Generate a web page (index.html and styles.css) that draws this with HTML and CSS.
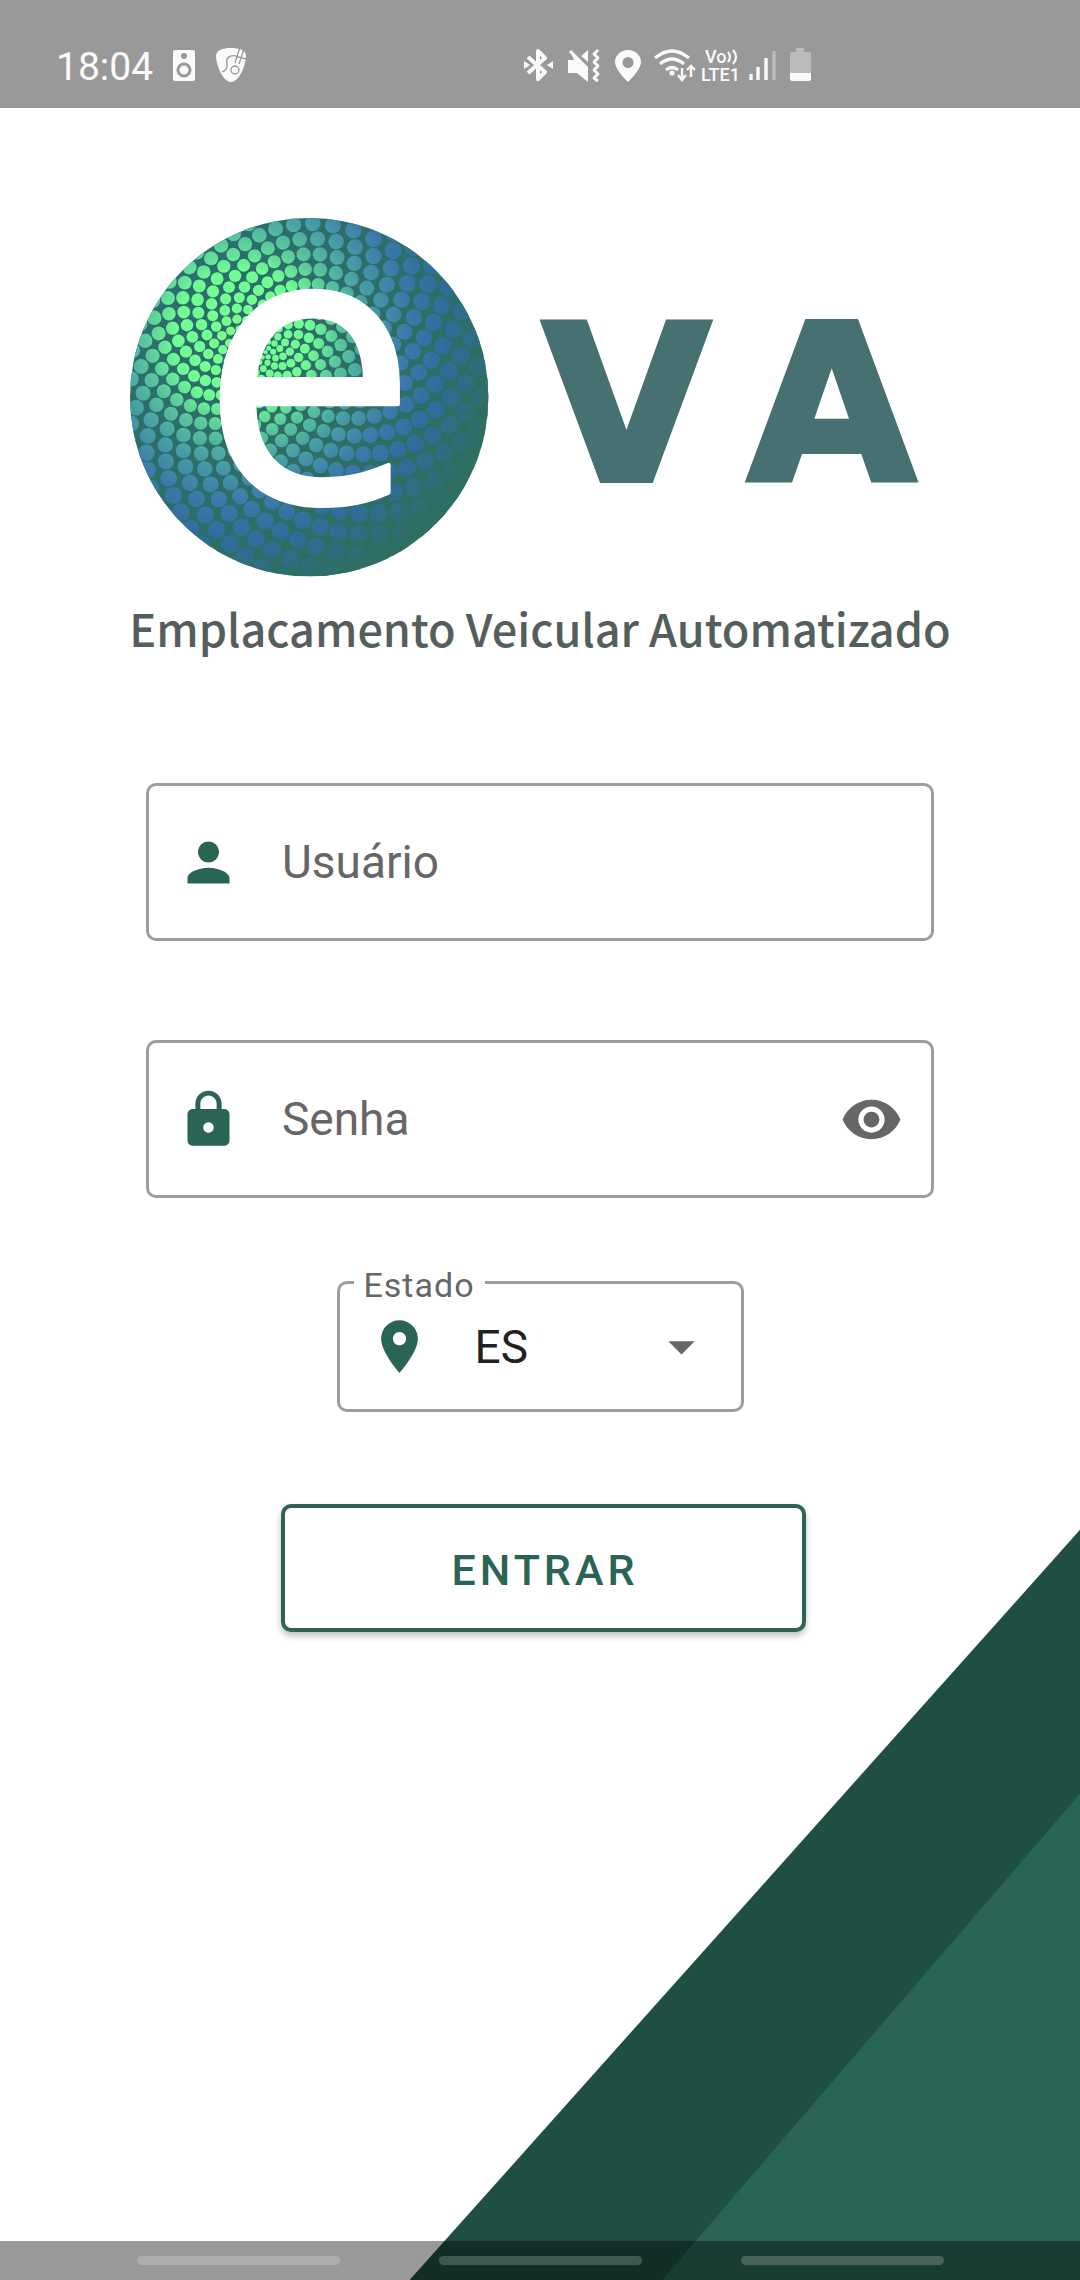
FILE: index.html
```html
<!DOCTYPE html>
<html lang="pt-BR">
<head>
<meta charset="utf-8">
<meta name="viewport" content="width=device-width, initial-scale=1">
<title>eVA - Emplacamento Veicular Automatizado</title>
<link rel="stylesheet" href="styles.css">
</head>
<body>
<svg class="corner" viewBox="0 0 668 750" preserveAspectRatio="xMaxYMax slice" aria-hidden="true">
  <path class="corner-dark" d="M670 0V752H-2Z"/>
  <path class="corner-light" d="M670 263V752H250Z"/>
</svg>

<header class="status">
  <div class="status-left">
    <time class="clock">18:04</time>
    <svg width="22" height="38" viewBox="0 0 22 38" aria-hidden="true">
      <rect x="0" y="4" width="22" height="31" rx="2" fill="#fafafa"/>
      <circle cx="11" cy="10" r="3" fill="#999"/>
      <circle cx="11" cy="24" r="6" fill="#fafafa" stroke="#999" stroke-width="3"/>
    </svg>
    <svg width="32" height="38" viewBox="0 0 32 38" aria-hidden="true">
      <path d="M1 10C1 4 8 2 16 2s15 2 15 8c0 9-7 26-15 26S1 19 1 10Z" fill="#fafafa"/>
      <path d="M7 26c3-1 6-4 5-8-1-4 0-7 4-8 3-1 5 0 7 1l8 2M20 17l5-16M24 18l5-15" fill="none" stroke="#999" stroke-width="1.300"/>
      <circle cx="20" cy="24" r="4" fill="none" stroke="#999" stroke-width="1.300"/>
    </svg>
  </div>
  <div class="status-right">
    <svg width="38" height="38" viewBox="0 0 38 38" aria-hidden="true">
      <path d="M10 11l17 15-7 7V5l7 7-17 15" fill="none" stroke="#fafafa" stroke-width="4" stroke-linejoin="round"/>
      <path d="M6 15l6 4-6 4ZM35 15l-6 4 6 4Z" fill="#fafafa"/>
    </svg>
    <svg width="42" height="38" viewBox="0 0 42 38" aria-hidden="true">
      <path d="M6 14h6l14 12v10l-11-9H6ZM26 4v12l-7-6Z" fill="#fafafa"/>
      <path d="M8 5l18 17v5L12 14Z" fill="#fafafa"/>
      <path d="M8 5l17 17" stroke="#fafafa" stroke-width="3"/>
      <path d="M36 4l-4 4 4 4-4 4 4 4-4 4 4 4-4 4 4 3" fill="none" stroke="#fafafa" stroke-width="3" stroke-linejoin="round"/>
    </svg>
    <svg width="36" height="38" viewBox="0 0 36 38" aria-hidden="true">
      <path d="M18 4C11 4 5 9 5 16c0 8 13 20 13 20s13-12 13-20c0-7-6-12-13-12Zm0 7a5 5 0 1 1 0 11 5 5 0 0 1 0-11Z" fill="#fafafa"/>
    </svg>
    <svg width="44" height="38" viewBox="0 0 44 38" aria-hidden="true">
      <path d="M3 12q17-14 34 0M8 18q12-10 24 0M14 24q6-5 12 0" fill="none" stroke="#fafafa" stroke-width="3.200"/>
      <circle cx="20" cy="27" r="2.600" fill="#fafafa"/>
      <path d="M30 22v10M39 31V21M26 29l4 5 4-5M35 24l4-4 4 4" fill="none" stroke="#fafafa" stroke-width="2.400"/>
    </svg>
    <svg class="volte" width="38" height="38" viewBox="0 0 38 38" role="img" aria-label="VoLTE 1">
      <text x="3" y="17">Vo</text>
      <path d="M26 6q4 5 0 10M31 4q6 7 0 14" fill="none" stroke="#fafafa" stroke-width="2.200"/>
      <text x="-1" y="35">LTE1</text>
    </svg>
    <svg width="32" height="38" viewBox="0 0 32 38" aria-hidden="true">
      <path d="M5 28v6M12 21v13M20 12v22" stroke="#fafafa" stroke-width="3.400"/>
      <path d="M28 5v29" stroke="#bbb" stroke-width="3.400"/>
    </svg>
    <svg width="32" height="38" viewBox="0 0 32 38" aria-hidden="true">
      <path d="M12 2h8v4h5q2 0 2 2v19H6V8q0-2 2-2h4Z" fill="#bbb"/>
      <path d="M6 27h21v6q0 2-2 2H8q-2 0-2-2Z" fill="#fafafa"/>
    </svg>
  </div>
</header>

<main class="login">
  <h1 class="brand">
    <svg class="logo" viewBox="0 0 820 360" role="img" aria-label="eVA">
      <defs>
        <clipPath id="disc"><circle cx="179" cy="179" r="179"/></clipPath>
        <linearGradient id="base" x1="0" y1="0" x2="1" y2="1">
          <stop offset="0" stop-color="#2a6e70"/>
          <stop offset="1" stop-color="#2f6e5e"/>
        </linearGradient>
        <radialGradient id="glow" gradientUnits="userSpaceOnUse" cx="112" cy="118" r="260">
          <stop offset="0" stop-color="#84f580"/>
          <stop offset="0.12" stop-color="#74ff92"/>
          <stop offset="0.26" stop-color="#70fb94"/>
          <stop offset="0.38" stop-color="#58c49c"/>
          <stop offset="0.5" stop-color="#479ca5"/>
          <stop offset="0.64" stop-color="#3a79a9"/>
          <stop offset="0.78" stop-color="#306c9c"/>
          <stop offset="0.92" stop-color="#2f6e78"/>
          <stop offset="1" stop-color="#2f6e62"/>
        </radialGradient>
      </defs>
      <circle cx="179" cy="179" r="179" fill="url(#base)"/>
      <g id="dots" clip-path="url(#disc)" fill="url(#glow)"></g>
      <text class="logo-e" x="179" y="284" text-anchor="middle">e</text>
      <text class="logo-va" x="496" y="262" text-anchor="middle">V</text>
      <text class="logo-va" x="701" y="262" text-anchor="middle">A</text>
    </svg>
    <span class="tagline">Emplacamento Veicular Automatizado</span>
  </h1>

  <form class="form">
    <div class="field">
      <svg class="icon" viewBox="0 0 24 24" aria-hidden="true"><path d="M12 12c2.210 0 4-1.790 4-4s-1.790-4-4-4-4 1.790-4 4 1.790 4 4 4zm0 2c-2.670 0-8 1.340-8 4v2h16v-2c0-2.660-5.330-4-8-4z"/></svg>
      <input type="text" placeholder="Usuário" aria-label="Usuário" autocomplete="username">
    </div>
    <div class="field">
      <svg class="icon" viewBox="0 0 24 24" aria-hidden="true"><path d="M18 8h-1V6c0-2.760-2.240-5-5-5S7 3.240 7 6v2H6c-1.100 0-2 .9-2 2v10c0 1.100.9 2 2 2h12c1.100 0 2-.9 2-2V10c0-1.100-.9-2-2-2zm-6 9c-1.100 0-2-.9-2-2s.9-2 2-2 2 .9 2 2-.9 2-2 2zm3.100-9H8.900V6c0-1.710 1.390-3.100 3.100-3.100s3.100 1.390 3.100 3.100v2z"/></svg>
      <input type="password" placeholder="Senha" aria-label="Senha" autocomplete="current-password">
      <button class="reveal" type="button" aria-label="Mostrar senha">
        <svg class="icon icon-grey" viewBox="0 0 24 24" aria-hidden="true"><path d="M12 4.500C7 4.500 2.730 7.610 1 12c1.730 4.390 6 7.500 11 7.500s9.270-3.110 11-7.500c-1.730-4.390-6-7.500-11-7.500zM12 17c-2.760 0-5-2.240-5-5s2.240-5 5-5 5 2.240 5 5-2.240 5-5 5zm0-8c-1.660 0-3 1.340-3 3s1.340 3 3 3 3-1.340 3-3-1.340-3-3-3z"/></svg>
      </button>
    </div>
    <div class="state">
      <label for="estado">Estado</label>
      <svg class="icon state-pin" viewBox="0 0 24 24" aria-hidden="true"><path d="M12 2C8.130 2 5 5.130 5 9c0 5.250 7 13 7 13s7-7.750 7-13c0-3.870-3.130-7-7-7zm0 9.500c-1.380 0-2.500-1.120-2.500-2.500s1.120-2.500 2.500-2.500 2.500 1.120 2.500 2.500-1.120 2.500-2.500 2.500z"/></svg>
      <select id="estado">
        <option>ES</option>
      </select>
      <svg class="icon icon-grey state-arrow" viewBox="0 0 24 24" aria-hidden="true"><path d="M7 10l5 5 5-5z"/></svg>
    </div>
    <button class="enter" type="submit">ENTRAR</button>
  </form>
</main>

<nav class="navbar" aria-label="Navegação do sistema">
  <span class="pill"></span>
  <span class="pill"></span>
  <span class="pill"></span>
</nav>
<script src="dots.js"></script>
</body>
</html>
```
FILE: styles.css
```css
* {
  box-sizing: border-box;
}

body {
  position: relative;
  display: flex;
  flex-direction: column;
  min-height: 100vh;
  margin: 0;
  background: #fff;
  font-family: Roboto, "Liberation Sans", sans-serif;
}

svg {
  display: block;
}

.corner {
  position: absolute;
  right: 0;
  bottom: 0;
  z-index: -1;
  width: 62%;
}

.corner-dark {
  fill: #1f4e42;
}

.corner-light {
  fill: #2a6455;
}

/* System status bar */
.status {
  display: grid;
  grid-template-columns: 48% 1fr;
  align-items: center;
  height: 108px;
  padding-top: 22px;
  background: #999;
}

.status-left {
  display: flex;
  align-items: center;
  gap: 20px;
  padding-left: 56px;
}

.status-right {
  display: flex;
  align-items: center;
  gap: 6px;
}

.clock {
  padding-top: 4px;
  color: #fafafa;
  font-size: 39px;
  line-height: 40px;
}

.volte {
  overflow: visible;
}

.volte text {
  fill: #fafafa;
  font-size: 18px;
  font-weight: 500;
}

/* Login screen */
.login {
  display: flex;
  flex-direction: column;
  align-items: center;
  padding: 110px 12% 0;
}

.brand {
  display: flex;
  flex-direction: column;
  align-items: center;
  width: 100%;
  margin: 0;
  font-weight: 500;
}

.logo {
  width: 100%;
  overflow: visible;
}

.logo-e {
  fill: #fff;
  stroke: #fff;
  stroke-width: 4px;
  stroke-linejoin: round;
  font-family: "Open Sans", "Noto Sans", sans-serif;
  font-size: 388px;
  font-weight: 400;
}

.logo-va {
  fill: #467072;
  stroke: #467072;
  stroke-width: 6px;
  font-family: "DejaVu Sans", sans-serif;
  font-size: 216px;
  font-weight: 700;
}

.tagline {
  margin-top: 20px;
  color: #545e5c;
  font-family: "Noto Sans CJK SC", "Open Sans", sans-serif;
  font-size: 45px;
  line-height: 60px;
  white-space: nowrap;
}

.form {
  display: flex;
  flex-direction: column;
  align-items: center;
  width: 96%;
  margin-top: 125px;
}

.field {
  display: flex;
  align-items: center;
  gap: 42px;
  width: 100%;
  height: 158px;
  margin-bottom: 99px;
  padding: 0 28px;
  border: 3px solid #9d9d9d;
  border-radius: 10px;
}

.field + .state {
  margin-top: -16px;
}

.icon {
  flex: none;
  width: 63px;
  height: 63px;
  fill: #2a6455;
}

.icon-grey {
  fill: #666;
}

input,
select {
  flex: 1;
  min-width: 0;
  padding: 0;
  border: 0;
  outline: 0;
  background: transparent;
  color: #212121;
  font: 400 46px/60px Roboto, sans-serif;
}

input::placeholder {
  color: #666;
  opacity: 1;
}

.reveal {
  padding: 0;
  border: 0;
  background: none;
}

.state {
  position: relative;
  display: grid;
  grid-template-columns: 63px 1fr 63px;
  column-gap: 44px;
  align-items: center;
  width: 407px;
  height: 131px;
  padding: 0 28px;
  border: 3px solid #9d9d9d;
  border-radius: 10px;
}

.state label {
  position: absolute;
  top: -19px;
  left: 14px;
  padding: 0 10px;
  background: #fff;
  color: #666;
  font-size: 34px;
  line-height: 40px;
  letter-spacing: 1px;
}

.state select {
  grid-area: 1 / 2 / 2 / 4;
  appearance: none;
}

.state-pin {
  grid-area: 1 / 1;
}

.state-arrow {
  grid-area: 1 / 3;
  pointer-events: none;
}

.enter {
  width: 525px;
  height: 128px;
  margin-top: 92px;
  margin-left: 6px;
  padding: 4px 0 0 4px;
  border: 4px solid #2f6255;
  border-radius: 10px;
  background: #fff;
  box-shadow: 0 4px 6px rgba(0, 0, 0, 0.25);
  color: #2a6455;
  font: 500 43px/60px Roboto, sans-serif;
  letter-spacing: 4px;
}

/* System navigation bar */
.navbar {
  position: absolute;
  right: 0;
  bottom: 0;
  left: 0;
  display: flex;
  justify-content: center;
  align-items: center;
  gap: 99px;
  height: 39px;
  background: rgba(0, 0, 0, 0.4);
}

.pill {
  width: 203px;
  height: 9px;
  border-radius: 5px;
  background: rgba(255, 255, 255, 0.2);
}
```
FILE: dots.js
```js
// Sunflower spiral inside the logo disc; dots grow with distance from the centre.
const group = document.getElementById("dots");
const golden = Math.PI * (3 - Math.sqrt(5));
const centre = { x: 130, y: 132 };

for (let k = 3; k < 800; k++) {
  const dist = 0.986 * Math.pow(k, 0.85);
  const spacing = dist * Math.sqrt((2 * Math.PI * 0.85) / k);
  const dot = document.createElementNS("http://www.w3.org/2000/svg", "circle");
  dot.setAttribute("cx", (centre.x + dist * Math.cos(k * golden)).toFixed(1));
  dot.setAttribute("cy", (centre.y + dist * Math.sin(k * golden)).toFixed(1));
  dot.setAttribute("r", (spacing * 0.45).toFixed(1));
  group.appendChild(dot);
}
```
